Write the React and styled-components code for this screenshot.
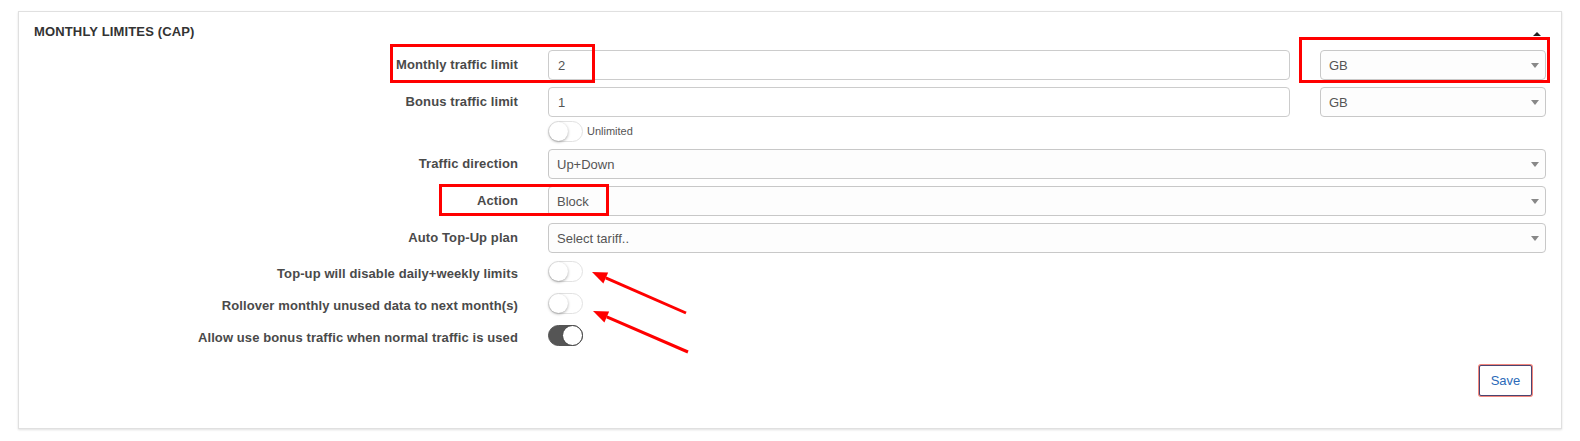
import React from 'react'
import styled, { createGlobalStyle } from 'styled-components'

const GlobalStyle = createGlobalStyle`
    body {
        margin: 0;
        background: #fff;
        font-family: "Liberation Sans", Arial, sans-serif;
    }
`

// --------- page + panel -----------
const Page = styled.div`
    position: relative;
    width: 1580px;
    height: 441px;
    box-sizing: border-box;
    padding: 11px 18px 0;
`
const Panel = styled.div`
    border: 1px solid #e0e0e0;
    box-shadow: 0 1px 2px rgba(0, 0, 0, 0.12);
    padding: 12px 15px 32px;
`
const Header = styled.div`
    display: flex;
    justify-content: space-between;
    align-items: center;
    height: 15px;
`
const Title = styled.div`
    font-size: 13px;
    font-weight: bold;
    color: #333;
    line-height: 15px;
    letter-spacing: 0.15px;
`
const CollapseCaret = styled.span`
    width: 0;
    height: 0;
    border-left: 4px solid transparent;
    border-right: 4px solid transparent;
    border-bottom: 4px solid #222;
    margin-right: 5px;
    margin-top: 4px;
`

// --------- form -----------
const Form = styled.div`
    margin-top: 11px;
    display: flex;
    flex-direction: column;
    gap: 7px;
`
const Row = styled.div`
    display: grid;
    grid-template-columns: 484px 1fr;
    column-gap: 30px;
    align-items: start;
    min-height: ${p => (p.$toggle ? '25px' : '30px')};
`
const Label = styled.div`
    text-align: right;
    font-size: 13px;
    font-weight: bold;
    color: #4a4a4a;
    letter-spacing: 0.1px;
    line-height: ${p => (p.$toggle ? '22px' : '30px')};
    padding-top: ${p => (p.$toggle ? '3px' : '0')};
`
const Split = styled.div`
    display: grid;
    grid-template-columns: 1fr 226px;
    column-gap: 30px;
`
const TextInput = styled.input`
    display: block;
    width: 100%;
    height: 30px;
    box-sizing: border-box;
    border: 1px solid #ccc;
    border-radius: 4px;
    padding: 0 9px;
    font-family: inherit;
    font-size: 13px;
    color: #555;
    background: #fff;
    outline: none;
`
const Select = styled.div`
    display: flex;
    justify-content: space-between;
    align-items: center;
    height: 30px;
    box-sizing: border-box;
    border: 1px solid #c8c8c8;
    border-radius: 4px;
    padding: 0 6px 0 8px;
    background: #fdfdfd;
    font-size: 13px;
    color: #555;
`
const Caret = styled.span`
    width: 0;
    height: 0;
    border-left: 4px solid transparent;
    border-right: 4px solid transparent;
    border-top: 5px solid #888;
`
const Stack = styled.div`
    display: flex;
    flex-direction: column;
`
const ToggleLine = styled.div`
    display: flex;
    align-items: center;
    gap: 4px;
    margin-top: 3px;
    font-size: 11px;
    color: #555;
`
const Track = styled.div`
    width: 35px;
    height: 21px;
    box-sizing: border-box;
    border-radius: 11px;
    border: 1px solid ${p => (p.$on ? '#555' : '#e2e2e2')};
    background: ${p => (p.$on ? '#555' : '#fff')};
    display: flex;
    align-items: center;
    justify-content: ${p => (p.$on ? 'flex-end' : 'flex-start')};
    margin-top: 1px;
`
const Knob = styled.span`
    width: ${p => (p.$on ? '21px' : '19px')};
    height: ${p => (p.$on ? '21px' : '19px')};
    box-sizing: border-box;
    border-radius: 50%;
    background: #fff;
    border: ${p => (p.$on ? '1px solid #444' : 'none')};
    margin-right: ${p => (p.$on ? '-1px' : '0')};
    box-shadow: ${p => (p.$on ? 'none' : '0 1px 3px rgba(0,0,0,0.35)')};
`

// --------- footer -----------
const Actions = styled.div`
    display: flex;
    justify-content: flex-end;
    margin-top: 16px;
    padding-right: 14px;
`
const SaveButton = styled.button`
    width: 53px;
    height: 31px;
    border: 1px solid #4b4470;
    box-shadow: 0 0 0 1px #f3877d;
    border-radius: 2px;
    background: #fff;
    color: #2c6ab8;
    font-family: inherit;
    font-size: 13px;
    cursor: pointer;
`

// --------- annotations -----------
const Overlay = styled.svg`
    position: absolute;
    top: 0;
    left: 0;
    pointer-events: none;
`

const Toggle = ({ on }) => (
    <Track $on={on}>
        <Knob $on={on} />
    </Track>
)

const Arrow = ({ x1, y1, x2, y2 }) => {
    const dx = x2 - x1
    const dy = y2 - y1
    const len = Math.hypot(dx, dy)
    const ux = dx / len
    const uy = dy / len
    const bx = x2 - ux * 15
    const by = y2 - uy * 15
    const px = -uy * 6
    const py = ux * 6
    return (
        <g>
            <line x1={x1} y1={y1} x2={bx} y2={by} stroke="#f00" strokeWidth="3" />
            <polygon points={`${x2},${y2} ${bx + px},${by + py} ${bx - px},${by - py}`} fill="#f00" />
        </g>
    )
}

const App = () => {
    return (
        <Page>
            <GlobalStyle />
            <Panel>
                <Header>
                    <Title>MONTHLY LIMITES (CAP)</Title>
                    <CollapseCaret />
                </Header>
                <Form>
                    <Row>
                        <Label>Monthly traffic limit</Label>
                        <Split>
                            <TextInput defaultValue="2" />
                            <Select>GB<Caret /></Select>
                        </Split>
                    </Row>
                    <Row>
                        <Label>Bonus traffic limit</Label>
                        <Stack>
                            <Split>
                                <TextInput defaultValue="1" />
                                <Select>GB<Caret /></Select>
                            </Split>
                            <ToggleLine>
                                <Toggle />
                                Unlimited
                            </ToggleLine>
                        </Stack>
                    </Row>
                    <Row>
                        <Label>Traffic direction</Label>
                        <Select>Up+Down<Caret /></Select>
                    </Row>
                    <Row>
                        <Label>Action</Label>
                        <Select>Block<Caret /></Select>
                    </Row>
                    <Row>
                        <Label>Auto Top-Up plan</Label>
                        <Select>Select tariff..<Caret /></Select>
                    </Row>
                    <Row $toggle>
                        <Label $toggle>Top-up will disable daily+weekly limits</Label>
                        <div><Toggle /></div>
                    </Row>
                    <Row $toggle>
                        <Label $toggle>Rollover monthly unused data to next month(s)</Label>
                        <div><Toggle /></div>
                    </Row>
                    <Row $toggle>
                        <Label $toggle>Allow use bonus traffic when normal traffic is used</Label>
                        <div><Toggle on /></div>
                    </Row>
                </Form>
                <Actions>
                    <SaveButton>Save</SaveButton>
                </Actions>
            </Panel>
            <Overlay width="1580" height="441">
                <rect x="391.5" y="45.5" width="202" height="36" fill="none" stroke="#f00" strokeWidth="3" />
                <rect x="1300.5" y="38.5" width="248" height="43" fill="none" stroke="#f00" strokeWidth="3" />
                <rect x="440.5" y="185.5" width="167" height="29" fill="none" stroke="#f00" strokeWidth="3" />
                <Arrow x1={686} y1={313} x2={592} y2={272} />
                <Arrow x1={688} y1={352} x2={593} y2={311} />
            </Overlay>
        </Page>
    )
}

export default App
